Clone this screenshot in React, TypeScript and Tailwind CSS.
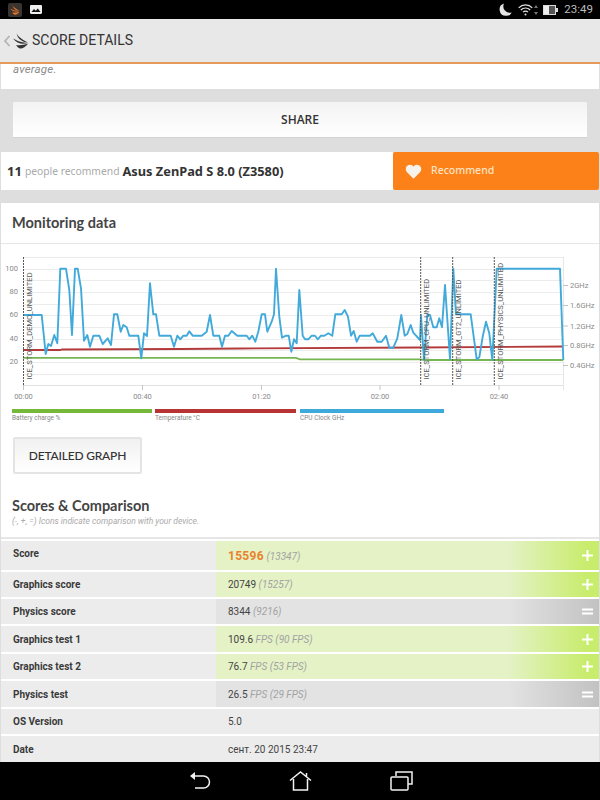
const leftLine = [70,195,125,195,137,312,145,282,153,288,163,255,172,280,181,56,198,56,208,120,216,255,225,56,233,56,243,115,252,272,262,255,270,290,280,257,298,257,308,282,323,265,333,285,342,193,352,193,362,245,370,225,380,232,388,257,415,257,424,325,432,250,441,258,450,100,460,193,468,193,478,257,512,257,522,290,532,257,541,268,550,257,560,257,568,244,578,257,605,257,620,245,630,195,640,257,658,257,666,290,675,257,685,257,695,243,712,257,740,257,748,268,757,257,766,275,775,245,785,193,795,193,802,245,815,215,822,193,828,56,838,200,846,263,858,257,866,257,874,305,882,268,890,280,898,120];
const rightLine = [8,257,15,268,25,268,35,257,45,257,53,268,63,257,73,257,85,250,97,257,106,193,125,193,134,180,144,200,153,257,161,243,170,275,179,257,210,257,218,250,232,275,245,275,258,257,268,293,280,293,292,265,304,195,314,257,322,252,332,225,340,248,360,270,363,195,372,330,382,195,390,195,400,232,410,232,418,205,426,232,435,105,450,328,460,56,468,193,512,193,530,328,538,322,548,260,558,215,568,250,577,330,590,56,780,56,790,330];

// coordinates were read off 3x crops, so scale them back here
const toPoints = () => {
  const pts: string[] = [];
  for (let i = 0; i < leftLine.length; i += 2) {
    pts.push(`${(leftLine[i] / 3).toFixed(1)},${(leftLine[i + 1] / 3).toFixed(1)}`);
  }
  for (let i = 0; i < rightLine.length; i += 2) {
    pts.push(`${(300 + rightLine[i] / 3).toFixed(1)},${(rightLine[i + 1] / 3).toFixed(1)}`);
  }
  return pts.join(" ");
};

const Chart = () => {
  const grid = [7, 19, 30, 42, 54, 65, 77, 89, 100, 112, 124];
  const leftLabels = [["100", 19], ["80", 42], ["60", 65], ["40", 89], ["20", 112]] as const;
  const rightLabels = [["2GHz", 35.5], ["1.6GHz", 55.5], ["1.2GHz", 76], ["0.8GHz", 95.5], ["0.4GHz", 115.5]] as const;
  const xLabels = [["00:00", 23.5], ["00:40", 142.5], ["01:20", 261.5], ["02:00", 380], ["02:40", 499]] as const;
  const markers = [
    [23.5, "ICE_STORM_DEMO_UNLIMITED", 32, 129.5],
    [420.7, "ICE_STORM_CPU_UNLIMITED", 429, 129.5],
    [452.7, "ICE_STORM_GT2_UNLIMITED", 461, 129.5],
    [494.3, "ICE_STORM_PHYSICS_UNLIMITED", 503, 129.5],
  ] as const;
  return (
    <svg width="598" height="157" viewBox="1 0 598 157" className="block">
      {grid.map((y) => (
        <line key={y} x1="23" x2="563" y1={y + 0.5} y2={y + 0.5} stroke="#ececec" strokeWidth="1" />
      ))}
      <line x1="23" x2="563" y1="135.5" y2="135.5" stroke="#e2e2e2" />
      <line x1="563.5" x2="563.5" y1="7" y2="140" stroke="#e6e6e6" />
      {xLabels.map(([t, x]) => (
        <g key={t}>
          <line x1={x} x2={x} y1="135" y2="140" stroke="#c4c4c4" />
          <text x={x} y="149" textAnchor="middle" fontSize="7.5" fill="#8a8a8a" fontFamily="Roboto, sans-serif">{t}</text>
        </g>
      ))}
      {leftLabels.map(([t, y]) => (
        <text key={t} x="18" y={y + 2} textAnchor="end" fontSize="7.5" fill="#8a8a8a" fontFamily="Roboto, sans-serif">{t}</text>
      ))}
      {rightLabels.map(([t, y]) => (
        <g key={t}>
          <line x1="563" x2="568" y1={y} y2={y} stroke="#c4c4c4" />
          <text x="570" y={y + 2.5} fontSize="7.5" fill="#8a8a8a" fontFamily="Roboto, sans-serif">{t}</text>
        </g>
      ))}
      <polyline points="23,100 60,100 62,99.5 180,99 240,98.5 420,97.5 563,96.5" fill="none" stroke="#b33a3a" strokeWidth="1.8" />
      <polyline points="23,107.8 296,107.8 300,109.3 420,109.3 426,110 563,110" fill="none" stroke="#76b650" strokeWidth="1.8" />
      <polyline points={toPoints()} fill="none" stroke="#41aadb" strokeWidth="1.9" strokeLinejoin="round" />
      {markers.map(([x, label, tx, ty]) => (
        <g key={label}>
          <line x1={x} x2={x} y1="7" y2="135" stroke="#555" strokeWidth="1" strokeDasharray="2 1" />
          <text
            transform={`translate(${tx} ${ty}) rotate(-90)`}
            fontSize="7.6"
            fill="#555"
            fontFamily="Roboto, sans-serif"
          >
            {label}
          </text>
        </g>
      ))}
    </svg>
  );
};

const Logo = ({ className }: { className?: string }) => (
  <svg viewBox="0 0 15 16" className={className} fill="currentColor">
    <path d="M3.500 0 C4.500 3 8 6 15 9.500 C9 9 4.500 6 3.500 0Z" />
    <path d="M0 5.500 C3 7 7 9.500 15 10 C9 12 3.500 10 0 5.500Z" />
    <path d="M3 12 C7 12.500 11 12 15 10.700 C12.500 14 9 16 7 15.500 C5.500 15 4 13.500 3 12Z" />
  </svg>
);

const Row = ({
  label,
  heightClass,
  labelClass = "",
  kind,
  children,
}: {
  label: string;
  heightClass: string;
  labelClass?: string;
  kind?: "plus" | "equal";
  children: React.ReactNode;
}) => {
  let valueBg = "bg-[#ececec]";
  if (kind === "plus") valueBg = "bg-[linear-gradient(90deg,#e4f2c6_76%,#c8ec6c_97%)]";
  if (kind === "equal") valueBg = "bg-[linear-gradient(90deg,#e3e3e3_76%,#c2c2c2_100%)]";
  return (
    <div className={`flex ${heightClass}`}>
      <div className={`w-[215px] bg-[#ececec] pl-[12px] flex items-center text-[10px] font-bold text-[#3a3a3a] ${labelClass}`}>
        {label}
      </div>
      <div className={`flex-1 ${valueBg} pl-[12px] pr-[6px] flex items-center justify-between text-[10px] text-[#444]`}>
        <div>{children}</div>
        {kind === "plus" && (
          <svg width="11" height="11" viewBox="0 0 11 11" className="text-white">
            <path d="M5.500 0v11M0 5.500h11" stroke="currentColor" strokeWidth="2" />
          </svg>
        )}
        {kind === "equal" && (
          <svg width="11" height="11" viewBox="0 0 11 11" className="text-white">
            <path d="M0 3.500h11M0 7.500h11" stroke="currentColor" strokeWidth="2" />
          </svg>
        )}
      </div>
    </div>
  );
};

const Cmp = ({ children }: { children: React.ReactNode }) => (
  <span className="italic text-[#a2a2a2]">{children}</span>
);

const App = () => {
  return (
    <div className="w-[600px] h-[800px] flex flex-col overflow-hidden bg-[#dedede] font-['Roboto',sans-serif]">
      {/* Status bar */}
      <div className="h-[19px] bg-black flex items-center pl-[8px] pr-[7px] shrink-0">
        <div className="w-[14px] h-[14px] rounded-[2px] bg-[#3a3330] flex items-center justify-center text-[#e8792a]">
          <Logo className="w-[10px] h-[10px]" />
        </div>
        <svg width="12" height="9" viewBox="0 0 12 9" className="ml-[8px]">
          <path d="M0 1.2C0 .5.5 0 1.2 0h9.6c.7 0 1.2.5 1.2 1.2v6.6c0 .7-.5 1.2-1.2 1.2H1.2C.5 9 0 8.500 0 7.800Z" fill="#eee" />
          <path d="M1.500 7l2.500-3 1.800 1.800L7.800 3.500 10.500 7Z" fill="#111" />
        </svg>
        <div className="ml-auto flex items-center text-[#e4e4e4]">
          <svg width="13" height="13" viewBox="0 0 13 13" fill="currentColor">
            <path d="M5 .5A6.300 6.300 0 0 0 6.800 12.800 6.300 6.300 0 0 0 12.800 9.500 6.500 6.500 0 0 1 5 .5Z" />
          </svg>
          <svg width="15" height="12" viewBox="0 0 15 12" fill="none" stroke="currentColor" strokeWidth="1.200" className="ml-[6px]">
            <path d="M.7 3.800a9.500 9.500 0 0 1 13.600 0M2.800 6a6.500 6.500 0 0 1 9.400 0M5 8.200a3.400 3.400 0 0 1 5 0" />
            <circle cx="7.500" cy="10.500" r="1" fill="currentColor" stroke="none" />
          </svg>
          <svg width="4" height="10" viewBox="0 0 4 10" fill="#777" className="ml-[1px]">
            <path d="M2 0l2 3H0ZM2 10 0 7h4Z" />
          </svg>
          <div className="ml-[5px] w-[13px] h-[10px] flex border border-[#ddd]">
            <div className="w-[5px] bg-[#eee]" />
            <div className="flex-1 bg-[#555]" />
          </div>
          <div className="w-[2px] h-[4px] bg-[#ddd]" />
          <span className="ml-[6px] text-[11.500px] text-[#bdbdbd] leading-none">23:49</span>
        </div>
      </div>

      {/* Action bar */}
      <div className="h-[43px] bg-[#e8e8e8] flex items-center shrink-0">
        <svg width="8" height="12" viewBox="0 0 8 12" fill="none" stroke="#b5b5b5" strokeWidth="1.800" className="ml-[3px]">
          <path d="M6.500 1 2 6l4.500 5" />
        </svg>
        <Logo className="w-[15px] h-[16px] text-[#333] ml-[2px]" />
        <span className="ml-[4px] text-[14px] text-[#333]">SCORE DETAILS</span>
      </div>
      <div className="h-[2px] bg-[#e59a5c] shrink-0" />

      {/* Scrolled content */}
      <div className="flex-1 min-h-0 flex flex-col">
        <div className="h-[25px] mx-[1px] bg-white pl-[12px] text-[11.500px] italic text-[#8a8a8a] leading-none tracking-[0.2px]">
          average.
        </div>

        <button className="h-[36px] mx-[13px] mt-[13px] bg-[linear-gradient(180deg,#f3f3f3,#ffffff)] rounded-[1px] border-b border-[#d4d4d4] text-[12px] font-semibold text-[#333] font-['Open_Sans',sans-serif]">
          SHARE
        </button>

        <div className="h-[38px] mx-[1px] mt-[14px] flex">
          <div className="w-[392px] bg-white flex items-center pl-[6px] font-['Noto_Sans',sans-serif] leading-none">
            <span className="text-[13px] font-bold text-[#333]">11</span>
            <span className="ml-[3px] text-[10.300px] text-[#aaa]">people recommend</span>
            <span className="ml-[3px] text-[12.800px] font-bold text-[#333]">Asus ZenPad S 8.0 (Z3580)</span>
          </div>
          <div className="flex-1 bg-[#fb8118] rounded-[2px] flex items-center pl-[12px] font-['Noto_Sans',sans-serif]">
            <svg width="17" height="15" viewBox="0 0 24 22" fill="#f7f3ec">
              <path d="M12 21.500 2.500 12C-1 8.500.5 1.500 6.500 1c2.500-.2 4.500 1 5.500 3 1-2 3-3.200 5.500-3 6 .5 7.500 7.500 4 11Z" />
            </svg>
            <span className="ml-[9px] text-[10.500px] font-medium text-[#fde3c6]">Recommend</span>
          </div>
        </div>

        {/* Monitoring + scores card */}
        <div className="flex-1 min-h-0 mx-[1px] mt-[13px] bg-white flex flex-col">
          <div className="h-[41px] border-b border-[#e6e6e6] pl-[11px] flex items-center font-['Lato',sans-serif] text-[14.500px] font-bold text-[#444]">
            Monitoring data
          </div>
          <div className="h-[6px]" />
          <div className="-mb-[1px]">
            <Chart />
          </div>
          <div className="flex pl-[11px] gap-[3px] mt-[3px]">
            <div className="w-[140px]">
              <div className="h-[4px] bg-[#76b83a]" />
              <div className="text-[6.500px] text-[#888] leading-[8px] mt-[1px]">Battery charge %</div>
            </div>
            <div className="w-[141px]">
              <div className="h-[4px] bg-[#b83333]" />
              <div className="text-[6.500px] text-[#888] leading-[8px] mt-[1px]">Temperature °C</div>
            </div>
            <div className="w-[144px] ml-[1px]">
              <div className="h-[4px] bg-[#3fa9dc]" />
              <div className="text-[6.500px] text-[#888] leading-[8px] mt-[1px]">CPU Clock GHz</div>
            </div>
          </div>

          <button className="self-start ml-[12px] mt-[15px] w-[129px] h-[37px] border-2 border-[#e4e4e4] rounded-[2px] bg-[linear-gradient(180deg,#f1f1f1,#ffffff)] font-['Lato',sans-serif] text-[12px] font-medium text-[#333] tracking-[-0.2px]">
            DETAILED GRAPH
          </button>

          <div className="mt-[22px] pl-[11px] font-['Lato',sans-serif] text-[14.500px] leading-[20px] font-bold text-[#444]">
            Scores &amp; Comparison
          </div>
          <div className="pl-[11px] text-[8.500px] leading-[11px] italic text-[#aaa]">
            (-, +, =) Icons indicate comparison with your device.
          </div>

          <div className="mt-[10px] border-t-2 border-[#e6e6e6] pt-[2px] flex flex-col gap-[2px]">
            <Row label="Score" heightClass="h-[29px]" labelClass="pb-[4px]" kind="plus">
              <span className="text-[12px] font-bold text-[#e8832c] tracking-[0.3px]">15596</span>{" "}
              <Cmp>(13347)</Cmp>
            </Row>
            <Row label="Graphics score" heightClass="h-[25px]" kind="plus">
              20749 <Cmp>(15257)</Cmp>
            </Row>
            <Row label="Physics score" heightClass="h-[25px]" kind="equal">
              8344 <Cmp>(9216)</Cmp>
            </Row>
            <Row label="Graphics test 1" heightClass="h-[26px]" kind="plus">
              109.6 <Cmp>FPS (90 FPS)</Cmp>
            </Row>
            <Row label="Graphics test 2" heightClass="h-[25px]" kind="plus">
              76.7 <Cmp>FPS (53 FPS)</Cmp>
            </Row>
            <Row label="Physics test" heightClass="h-[26px]" kind="equal">
              26.5 <Cmp>FPS (29 FPS)</Cmp>
            </Row>
            <Row label="OS Version" heightClass="h-[25px]">5.0</Row>
            <Row label="Date" heightClass="h-[26px]">сент. 20 2015 23:47</Row>
          </div>
        </div>
      </div>

      {/* Nav bar */}
      <div className="h-[38px] bg-black shrink-0 flex items-center justify-center gap-[78px] pl-[1px] text-[#f2f2f2]">
        <svg width="22" height="20" viewBox="0 0 22 20" fill="none" stroke="currentColor" strokeWidth="1.500">
          <path d="M4 5h10.500a5.500 5.500 0 0 1 0 12H6" />
          <path d="M6 1v8L1 5Z" fill="currentColor" stroke="none" />
        </svg>
        <svg width="23" height="20" viewBox="0 0 23 20" fill="none" stroke="currentColor" strokeWidth="1.500">
          <path d="M1 9.500 11.500 1 22 9.500M4.500 8v11h14V8M17.500 2v4" />
        </svg>
        <svg width="23" height="20" viewBox="0 0 23 20" fill="none" stroke="currentColor" strokeWidth="1.500">
          <path d="M6 5V1h16v12h-4" />
          <rect x="1" y="6" width="17" height="13" rx="1" />
        </svg>
      </div>
    </div>
  );
};

export default App;
